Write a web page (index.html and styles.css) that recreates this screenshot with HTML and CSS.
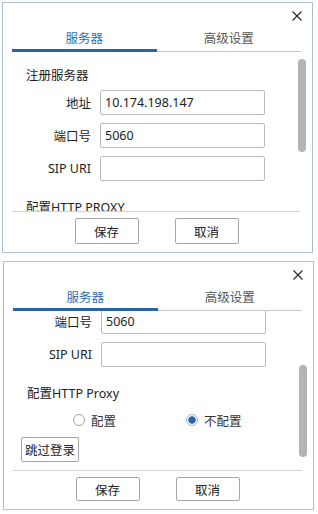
FILE: index.html
```html
<!DOCTYPE html>
<html lang="zh-CN">

<head>
  <meta charset="UTF-8">
  <meta name="viewport" content="width=device-width, initial-scale=1.0">
  <title>服务器设置</title>
  <link rel="stylesheet" href="styles.css">
</head>

<body>
  <!-- first view: list scrolled to the top -->
  <div class="dialog dialog--top">
    <div class="dialog-head">
      <button class="close-btn" aria-label="关闭">
        <svg width="10" height="10" viewBox="0 0 10 10"><path d="M0.5 0.5L9.5 9.5M9.5 0.5L0.5 9.5" stroke="#2a2a2a" stroke-width="1.2" fill="none"/></svg>
      </button>
    </div>
    <div class="tabs">
      <div class="tab tab--active">服务器</div>
      <div class="tab">高级设置</div>
    </div>
    <div class="dialog-body">
      <div class="form">
        <div class="section-title">注册服务器</div>
        <div class="field field--first">
          <span class="field-label">地址</span>
          <input class="field-input" type="text" value="10.174.198.147">
        </div>
        <div class="field">
          <span class="field-label">端口号</span>
          <input class="field-input" type="text" value="5060">
        </div>
        <div class="field">
          <span class="field-label">SIP URI</span>
          <input class="field-input" type="text" value="">
        </div>
        <div class="section-title section-title--proxy">配置HTTP PROXY</div>
        <div class="radio-row">
          <label class="radio-option"><span class="radio"></span>配置</label>
          <label class="radio-option"><span class="radio radio--checked"></span>不配置</label>
        </div>
        <button class="skip-btn">跳过登录</button>
      </div>
      <div class="thumb"></div>
    </div>
    <div class="dialog-foot">
      <button class="btn">保存</button>
      <button class="btn">取消</button>
    </div>
  </div>

  <!-- second view: list scrolled down -->
  <div class="dialog dialog--bottom">
    <div class="dialog-head">
      <button class="close-btn" aria-label="关闭">
        <svg width="10" height="10" viewBox="0 0 10 10"><path d="M0.5 0.5L9.5 9.5M9.5 0.5L0.5 9.5" stroke="#2a2a2a" stroke-width="1.2" fill="none"/></svg>
      </button>
    </div>
    <div class="tabs">
      <div class="tab tab--active">服务器</div>
      <div class="tab">高级设置</div>
    </div>
    <div class="dialog-body">
      <div class="form form--scrolled">
        <div class="section-title">注册服务器</div>
        <div class="field field--first">
          <span class="field-label">地址</span>
          <input class="field-input" type="text" value="10.174.198.147">
        </div>
        <div class="field">
          <span class="field-label">端口号</span>
          <input class="field-input" type="text" value="5060">
        </div>
        <div class="field">
          <span class="field-label">SIP URI</span>
          <input class="field-input" type="text" value="">
        </div>
        <div class="section-title section-title--proxy">配置HTTP Proxy</div>
        <div class="radio-row">
          <label class="radio-option"><span class="radio"></span>配置</label>
          <label class="radio-option"><span class="radio radio--checked"></span>不配置</label>
        </div>
        <button class="skip-btn">跳过登录</button>
      </div>
      <div class="thumb"></div>
    </div>
    <div class="dialog-foot">
      <button class="btn">保存</button>
      <button class="btn">取消</button>
    </div>
  </div>
</body>

</html>
```

FILE: styles.css
```css
* {
  box-sizing: border-box;
}

body {
  margin: 0;
  background: #fff;
  font-family: "Noto Sans", "Noto Sans CJK SC", sans-serif;
  font-size: 12.5px;
  color: #222;
}

button,
input {
  font-family: inherit;
  font-size: inherit;
  color: inherit;
}

.dialog {
  width: 311px;
  border: 1px solid #a9c0d6;
  background: #fff;
}

.dialog--top {
  margin: 2px 0 0 2px;
}

.dialog--bottom {
  margin: 8px 0 0 3px;
}

.dialog-head {
  height: 25px;
  display: flex;
  justify-content: flex-end;
  align-items: center;
  padding-right: 10px;
}

.close-btn {
  border: none;
  background: none;
  padding: 0;
  width: 10px;
  height: 10px;
  display: flex;
  cursor: pointer;
}

.tabs {
  display: flex;
  margin: 0 11px 0 9px;
  border-bottom: 1px solid #c9c9c9;
}

.tab {
  flex: 1;
  text-align: center;
  line-height: 20px;
  padding-top: 1px;
  border-bottom: 3px solid transparent;
  margin-bottom: -1px;
  color: #555;
}

.tab--active {
  color: #2c6db4;
  border-bottom-color: #2a64a8;
}

.dialog-body {
  height: 159px;
  position: relative;
  overflow: hidden;
}

.form {
  display: flex;
  flex-direction: column;
  padding: 14px 0 20px 23px;
}

.form--scrolled {
  margin-top: -73px;
}

.section-title {
  line-height: 20px;
}

.section-title--proxy {
  margin-top: 17px;
}

.field {
  display: flex;
  align-items: center;
  gap: 9px;
  margin-top: 8px;
}

.field--first {
  margin-top: 4px;
}

.field-label {
  width: 65px;
  text-align: right;
  white-space: nowrap;
}

.field-input {
  width: 165px;
  height: 25px;
  border: 1px solid #bcbcbc;
  border-radius: 2px;
  padding: 0 4px;
  outline: none;
  background: #fff;
}

.radio-row {
  display: flex;
  height: 20px;
  margin-top: 6px;
  padding-left: 46px;
}

.radio-option {
  width: 113px;
  display: flex;
  align-items: center;
  gap: 6px;
  color: #333;
}

.radio {
  width: 12px;
  height: 12px;
  border: 1px solid #a3a3a3;
  border-radius: 50%;
  background: #fff;
}

.radio--checked {
  border-color: #8fb3dc;
  background: radial-gradient(circle, #2b64ad 0 3.4px, #fff 4px);
}

.skip-btn {
  align-self: flex-start;
  height: 25px;
  margin: 7px 0 0 -6px;
  padding: 0 3px;
  border: 1px solid #a6a6a6;
  border-radius: 2px;
  background: #fff;
}

.thumb {
  position: absolute;
  right: 6px;
  top: 7px;
  width: 8px;
  height: 93px;
  border-radius: 4px;
  background: #b4b4b4;
}

.dialog--bottom .thumb {
  top: 54px;
  height: 92px;
}

.dialog-foot {
  display: flex;
  justify-content: center;
  gap: 36px;
  margin: 0 11px 0 9px;
  padding: 6px 0 8px;
  border-top: 1px solid #d2d2d2;
}

.btn {
  width: 64px;
  height: 26px;
  border: 1px solid #a6a6a6;
  border-radius: 2px;
  background: #fff;
}

.dialog--bottom .btn {
  height: 24px;
}
```
